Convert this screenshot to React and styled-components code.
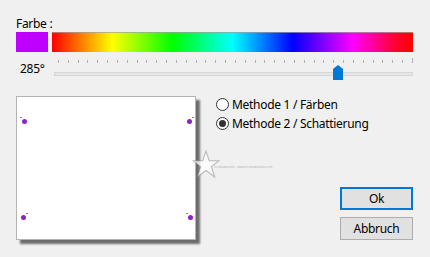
import React from "react";
import styled, { createGlobalStyle } from "styled-components";

const GlobalStyle = createGlobalStyle`
  body {
    margin: 0;
    background: #f0f0f0;
    font-family: "Noto Sans", "Open Sans", sans-serif;
    font-size: 12px;
    letter-spacing: -0.3px;
    color: #000;
  }
`;

function Ticks({ count }) {
  const items = [];
  for (let i = 0; i < count; i++) {
    items.push(<Tick key={i} $last={i === count - 1} />);
  }
  return <TickRow>{items}</TickRow>;
}

function Radio({ label, checked }) {
  return (
    <RadioRow>
      <RadioCircle>{checked && <RadioDot />}</RadioCircle>
      <span>{label}</span>
    </RadioRow>
  );
}

function App() {
  const hue = 285;
  // corner points of the preview, with the side of their small mark
  const dots = [
    { x: 5, y: 22, mark: "left" },
    { x: 170, y: 22, mark: "right" },
    { x: 4, y: 118, mark: "right" },
    { x: 171, y: 118, mark: "left" },
  ];

  return (
    <>
      <GlobalStyle />
      <Dialog>
        <Label>Farbe :</Label>
        <ColorRow>
          <Swatch />
          <HueBar />
        </ColorRow>
        <SliderRow>
          <Degree>{hue}°</Degree>
          <Slider>
            <Ticks count={37} />
            <Track />
            <Thumb style={{ left: `${Math.round((hue / 360) * 354 - 1)}px` }}>
              <svg width="10" height="15" viewBox="0 0 10 15">
                <path d="M0 4 L5 0 L10 4 L10 15 L0 15 Z" fill="#0078d7" />
              </svg>
            </Thumb>
          </Slider>
        </SliderRow>
        <MainRow>
          <Preview>
            {dots.map((d, i) => (
              <Dot key={i} $mark={d.mark} style={{ left: d.x, top: d.y }} />
            ))}
          </Preview>
          <Side>
            <RadioGroup>
              <Radio label="Methode 1 / Färben" />
              <Radio label="Methode 2 / Schattierung" checked />
            </RadioGroup>
            <Buttons>
              <Button $default>Ok</Button>
              <Button>Abbruch</Button>
            </Buttons>
          </Side>
          <Watermark>
            <svg width="28" height="28" viewBox="0 0 26 26">
              <path
                d="M13 1 L16 10 L25 10 L18 15.5 L21 25 L13 19 L5 25 L8 15.5 L1 10 L10 10 Z"
                fill="rgba(255,255,255,0.75)"
                stroke="rgba(110,110,110,0.45)"
                strokeWidth="1"
              />
            </svg>
            <WatermarkText>ecodrawstudio · www.ecodrawstudio.com</WatermarkText>
          </Watermark>
        </MainRow>
      </Dialog>
    </>
  );
}

export default App;

const Dialog = styled.div`
  width: 430px;
  height: 257px;
  box-sizing: border-box;
  padding: 17px 17px 0 16px;
  display: flex;
  flex-direction: column;
`;

const Label = styled.div`
  line-height: 14px;
  height: 15px;
`;

const ColorRow = styled.div`
  display: flex;
  gap: 4px;
  height: 20px;
`;

const Swatch = styled.div`
  width: 32px;
  background: #bf00ff;
`;

const HueBar = styled.div`
  flex: 1;
  box-sizing: border-box;
  border-top: 1px solid rgba(160, 160, 160, 0.7);
  background: linear-gradient(
    to right,
    #ff0000 0%,
    #ffff00 16.67%,
    #00ff00 33.33%,
    #00ffff 50%,
    #0000ff 66.67%,
    #ff00ff 83.33%,
    #ff0033 95%,
    #ff0000 100%
  );
`;

const SliderRow = styled.div`
  display: flex;
  align-items: flex-start;
  margin-top: 6px;
  height: 30px;
`;

const Degree = styled.div`
  width: 38px;
  padding-left: 4px;
  box-sizing: border-box;
  margin-top: 4px;
  line-height: 14px;
`;

const Slider = styled.div`
  position: relative;
  flex: 1;
  display: flex;
  flex-direction: column;
`;

const TickRow = styled.div`
  display: flex;
  justify-content: space-between;
  align-items: flex-end;
  padding: 0 0 0 4px;
  height: 5px;
`;

const Tick = styled.div`
  width: 1px;
  height: ${(p) => (p.$last ? "5px" : "3px")};
  background: #b0b0b0;
`;

const Track = styled.div`
  margin-top: 9px;
  height: 4px;
  box-sizing: border-box;
  border: 1px solid #d6d6d6;
  background: #e7e7e7;
`;

const Thumb = styled.div`
  position: absolute;
  top: 7px;
  width: 10px;
  height: 15px;
  line-height: 0;
`;

const MainRow = styled.div`
  position: relative;
  display: flex;
  margin-top: 8px;
`;

const Preview = styled.div`
  position: relative;
  width: 180px;
  height: 144px;
  box-sizing: border-box;
  background: #fff;
  border: 1px solid #b4b4b4;
  box-shadow: 4px 4px 2px rgba(0, 0, 0, 0.55);
`;

const Dot = styled.div`
  position: absolute;
  width: 5px;
  height: 5px;
  border-radius: 50%;
  background: #8a22c4;

  &::before {
    content: "";
    position: absolute;
    top: -2px;
    ${(p) => (p.$mark === "left" ? "left: -2px;" : "right: -2px;")}
    width: 2px;
    height: 1px;
    background: #8c8c8c;
  }
`;

const Side = styled.div`
  flex: 1;
  display: flex;
  flex-direction: column;
  justify-content: space-between;
  padding: 1px 0 0 20px;
`;

const RadioGroup = styled.div`
  display: flex;
  flex-direction: column;
  gap: 4px;
`;

const RadioRow = styled.div`
  display: flex;
  align-items: center;
  gap: 3px;
  height: 15px;
`;

const RadioCircle = styled.div`
  width: 13px;
  height: 13px;
  box-sizing: border-box;
  border: 1px solid #333;
  border-radius: 50%;
  background: #fff;
  display: flex;
  align-items: center;
  justify-content: center;
`;

const RadioDot = styled.div`
  width: 7px;
  height: 7px;
  border-radius: 50%;
  background: #333;
`;

const Buttons = styled.div`
  display: flex;
  flex-direction: column;
  align-items: flex-end;
  gap: 7px;
`;

const Button = styled.button`
  width: 73px;
  height: 23px;
  box-sizing: border-box;
  font-family: "Noto Sans", "Open Sans", sans-serif;
  font-size: 12px;
  letter-spacing: -0.3px;
  color: #000;
  background: #e1e1e1;
  border: ${(p) => (p.$default ? "2px solid #0078d7" : "1px solid #adadad")};
  padding: 0;
`;

const Watermark = styled.div`
  position: absolute;
  left: 176px;
  top: 54px;
  display: flex;
  align-items: center;
  pointer-events: none;
`;

const WatermarkText = styled.span`
  font-size: 3px;
  letter-spacing: 0;
  color: rgba(130, 130, 130, 0.6);
  margin-left: -6px;
  margin-top: 6px;
`;
